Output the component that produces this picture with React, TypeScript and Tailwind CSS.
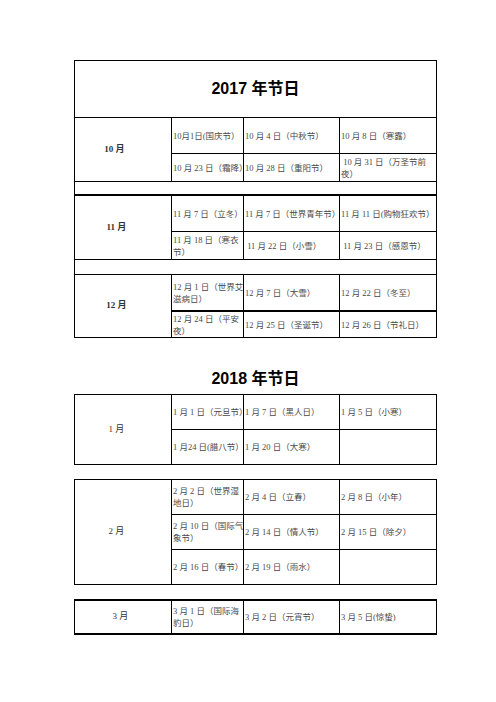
import type { ReactNode } from 'react';

const cellText = "font-['Liberation_Serif','Noto_Sans_CJK_SC',serif] text-[8.5px] leading-[12px] text-[#4a4a4a]";

const Cell = ({ children, className = '' }: { children?: ReactNode; className?: string }) => (
  <div className={`bg-white flex items-center overflow-hidden pl-px whitespace-pre ${cellText} ${className}`}>
    <div>{children}</div>
  </div>
);

const Month = ({ label, className = '' }: { label: string; className?: string }) => (
  <div
    className={`bg-white flex items-center justify-center font-['Liberation_Serif','Noto_Sans_CJK_SC',serif] text-[9px] text-[#333] ${className}`}
  >
    {label}
  </div>
);

const Title = ({ text }: { text: string }) => (
  <div className="font-['Liberation_Sans','Noto_Sans_CJK_SC',sans-serif] font-bold text-[16px] leading-[20px] text-black text-center">
    {text}
  </div>
);

const cols = 'grid grid-cols-[96px_71px_95px_96px] gap-px bg-black';

export default function App() {
  return (
    <div className="min-h-[702px] w-[496px] bg-white pt-[60px]">
      <div className="ml-[74px] w-[363px]">
        {/* 2017 */}
        <div className={`${cols} p-px grid-rows-[56px_35px_27px_12px_36px_27px_14px_35px_26px]`}>
          <div className="col-span-4 bg-white flex items-center justify-center">
            <Title text="2017 年节日" />
          </div>

          <Month label="10 月" className="row-span-2 font-bold pr-[17px]" />
          <Cell>10月1日(国庆节）</Cell>
          <Cell>10 月 4 日（中秋节）</Cell>
          <Cell>10 月 8 日（寒露）</Cell>
          <Cell>10 月 23 日（霜降）</Cell>
          <Cell>10 月 28 日（重阳节）</Cell>
          <Cell>
            {' 10 月 31 日（万圣节前'}
            <br />
            夜）
          </Cell>

          <div className="col-span-4 bg-white" />

          <Month label="11 月" className="row-span-2 font-bold pr-[13px] border-t border-black" />
          <Cell className="border-t border-black">11 月 7 日（立冬）</Cell>
          <Cell className="border-t border-black">11 月 7 日（世界青年节）</Cell>
          <Cell className="border-t border-black">11 月 11 日(购物狂欢节）</Cell>
          <Cell>
            11 月 18 日（寒衣
            <br />
            节）
          </Cell>
          <Cell>{' 11 月 22 日（小雪）'}</Cell>
          <Cell>{' 11 月 23 日（感恩节）'}</Cell>

          <div className="col-span-4 bg-white" />

          <Month label="12 月" className="row-span-2 font-bold pr-[13px]" />
          <Cell>
            12 月 1 日（世界艾
            <br />
            滋病日）
          </Cell>
          <Cell>12 月 7 日（大雪）</Cell>
          <Cell>12 月 22 日（冬至）</Cell>
          <Cell className="border-t border-black">
            12 月 24 日（平安
            <br />
            夜）
          </Cell>
          <Cell className="border-t border-black">12 月 25 日（圣诞节）</Cell>
          <Cell className="border-t border-black">12 月 26 日（节礼日）</Cell>
        </div>

        {/* 2018 */}
        <div className="mt-[31px] mb-[5px]">
          <Title text="2018 年节日" />
        </div>

        <div className={`${cols} p-px grid-rows-[34px_34px]`}>
          <Month label="1 月" className="row-span-2 pr-[13px]" />
          <Cell>1 月 1 日（元旦节）</Cell>
          <Cell>1 月 7 日（黑人日）</Cell>
          <Cell>1 月 5 日（小寒）</Cell>
          <Cell>1 月24 日(腊八节）</Cell>
          <Cell>1 月 20 日（大寒）</Cell>
          <Cell />
        </div>

        <div className={`${cols} p-px mt-[14px] grid-rows-[34px_34px_34px]`}>
          <Month label="2 月" className="row-span-3 pr-[13px]" />
          <Cell>
            2 月 2 日（世界湿
            <br />
            地日）
          </Cell>
          <Cell>2 月 4 日（立春）</Cell>
          <Cell>2 月 8 日（小年）</Cell>
          <Cell>
            2 月 10 日（国际气
            <br />
            象节）
          </Cell>
          <Cell>2 月 14 日（情人节）</Cell>
          <Cell>2 月 15 日（除夕）</Cell>
          <Cell>2 月 16 日（春节）</Cell>
          <Cell>2 月 19 日（雨水）</Cell>
          <Cell />
        </div>

        <div className={`${cols} px-px py-[2px] mt-[14px] grid-rows-[32px]`}>
          <Month label="3 月" className="pr-[5px]" />
          <Cell>
            3 月 1 日（国际海
            <br />
            豹日）
          </Cell>
          <Cell>3 月 2 日（元宵节）</Cell>
          <Cell>3 月 5 日(惊蛰)</Cell>
        </div>
      </div>
    </div>
  );
}
